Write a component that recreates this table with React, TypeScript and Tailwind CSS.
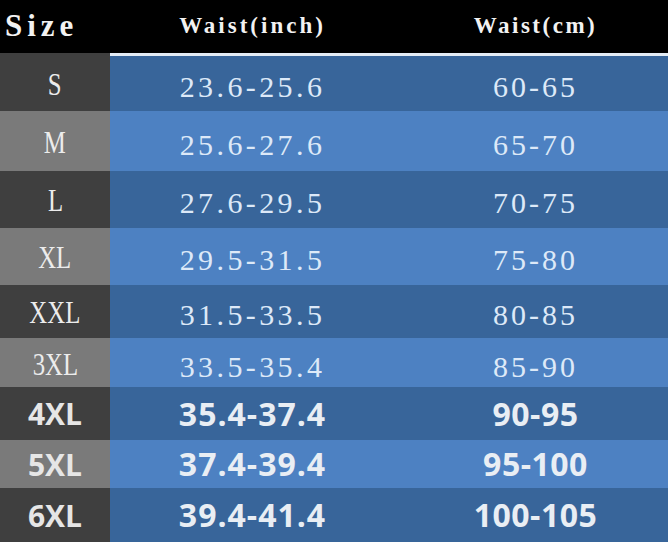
import React from "react";

type Row = { size: string; inch: string; cm: string; h: string; dark: boolean; bold: boolean };

const rows: Row[] = [
  { size: "S", inch: "23.6-25.6", cm: "60-65", h: "h-[55px]", dark: true, bold: false },
  { size: "M", inch: "25.6-27.6", cm: "65-70", h: "h-[60px]", dark: false, bold: false },
  { size: "L", inch: "27.6-29.5", cm: "70-75", h: "h-[57px]", dark: true, bold: false },
  { size: "XL", inch: "29.5-31.5", cm: "75-80", h: "h-[57px]", dark: false, bold: false },
  { size: "XXL", inch: "31.5-33.5", cm: "80-85", h: "h-[53px]", dark: true, bold: false },
  { size: "3XL", inch: "33.5-35.4", cm: "85-90", h: "h-[49px]", dark: false, bold: false },
  { size: "4XL", inch: "35.4-37.4", cm: "90-95", h: "h-[53px]", dark: true, bold: true },
  { size: "5XL", inch: "37.4-39.4", cm: "95-100", h: "h-[48px]", dark: false, bold: true },
  { size: "6XL", inch: "39.4-41.4", cm: "100-105", h: "h-[54px]", dark: true, bold: true },
];

const serif = "font-['Liberation_Serif',serif]";
const sans = "font-['Open_Sans',sans-serif] font-bold";

export default function App() {
  return (
    <div className="w-[668px] h-[542px] overflow-hidden bg-black">
      {/* header */}
      <div className="grid grid-cols-[110px_285px_1fr] h-[53px] bg-black">
        <div className={`flex items-center pl-[5px] text-[31px] font-bold tracking-[5px] text-[#f2f2f2] ${serif}`}>
          Size
        </div>
        <div className={`flex items-center justify-center text-[23px] font-bold tracking-[3px] text-[#f2f2f2] ${serif}`}>
          Waist(inch)
        </div>
        <div className={`flex items-center justify-center pl-[8px] text-[23px] font-bold tracking-[2.5px] text-[#f2f2f2] ${serif}`}>
          Waist(cm)
        </div>
      </div>
      <div className="grid grid-cols-[110px_1fr] h-[3px]">
        <div className="bg-[#3f3f3f]" />
        <div className="bg-[#e4ecf5]" />
      </div>

      {rows.map((r) => (
        <div key={r.size} className={`grid grid-cols-[110px_285px_1fr] ${r.h}`}>
          <div
            className={`flex items-center justify-center ${r.dark ? "bg-[#3f3f3f]" : "bg-[#7a7a7a]"} ${
              r.bold
                ? `${sans} text-[30px] text-[#e6e6e6]`
                : `${serif} text-[31px] pt-[4px] text-[#ececec]`
            }`}
          >
            <span className={r.bold ? "" : "inline-block scale-x-[0.8]"}>{r.size}</span>
          </div>
          <div
            className={`flex items-center justify-center ${r.dark ? "bg-[#38659a]" : "bg-[#4d81c2]"} ${
              r.bold
                ? `${sans} text-[32px] tracking-[1px] text-[#e9eef4]`
                : `${serif} text-[30px] tracking-[3.4px] pt-[6px] text-[#dde9f8]`
            }`}
          >
            {r.inch}
          </div>
          <div
            className={`flex items-center justify-center pl-[8px] ${r.dark ? "bg-[#38659a]" : "bg-[#4d81c2]"} ${
              r.bold
                ? `${sans} text-[32px] tracking-[0.5px] text-[#e9eef4]`
                : `${serif} text-[30px] tracking-[3px] pt-[6px] text-[#dde9f8]`
            }`}
          >
            {r.cm}
          </div>
        </div>
      ))}
    </div>
  );
}
